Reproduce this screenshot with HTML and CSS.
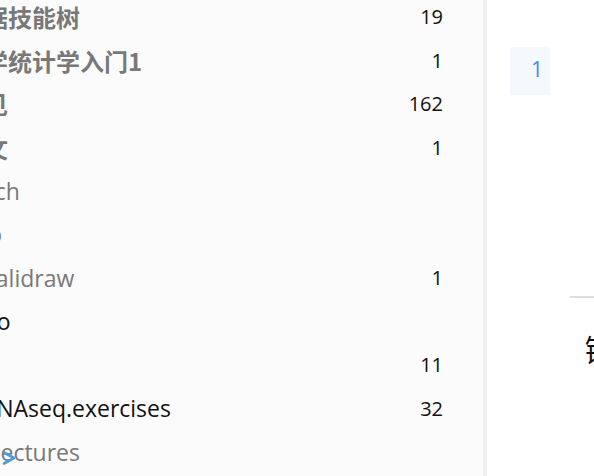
FILE: index.html
```html
<!DOCTYPE html>
<html lang="zh-CN">
<head>
<meta charset="utf-8">
<title>Notes</title>
<link rel="stylesheet" href="styles.css">
</head>
<body>
<div class="app">
  <aside class="sidebar">
    <ul class="list">
      <li class="row"><span class="name cjk">数据技能树</span><span class="count">19</span></li>
      <li class="row"><span class="name cjk">医学统计学入门1</span><span class="count">1</span></li>
      <li class="row"><span class="name cjk">意见</span><span class="count">162</span></li>
      <li class="row"><span class="name cjk">论文</span><span class="count">1</span></li>
      <li class="row"><span class="name muted">Patch</span><span class="count"></span></li>
      <li class="row"><span class="name muted">Info</span><span class="count"></span></li>
      <li class="row"><span class="name muted">Excalidraw</span><span class="count">1</span></li>
      <li class="row"><span class="name dark">Auto</span><span class="count"></span></li>
      <li class="row"><span class="name dark">R</span><span class="count">11</span></li>
      <li class="row"><span class="name dark">scRNAseq.exercises</span><span class="count">32</span></li>
      <li class="row"><span class="name muted">DL lectures</span><span class="count"></span></li>
    </ul>
    <svg class="chevron" width="18" height="14" viewBox="0 0 18 14"><polyline points="4,1.5 14,7 4,12.5" fill="none" stroke="#4a9be2" stroke-width="2.6" stroke-linecap="round" stroke-linejoin="round"/></svg>
  </aside>
  <main class="editor">
    <div class="gutter"><span class="lineno">1</span></div>
    <div class="rule"></div>
    <div class="heading">链</div>
  </main>
</div>
</body>
</html>
```
FILE: styles.css
```css
html, body {
  margin: 0;
  padding: 0;
  height: 100%;
  background: #ffffff;
  font-family: "Open Sans", "Noto Sans CJK SC", sans-serif;
}
.app {
  display: flex;
  height: 476px;
  overflow: hidden;
}
.sidebar {
  position: relative;
  width: 483px;
  flex: none;
  background: #fbfbfb;
  border-right: 4px solid #efefef;
  overflow: hidden;
}
.list {
  list-style: none;
  margin: -5px 0 0 -40px;
  padding: 0 40px 0 0;
}
.row {
  display: flex;
  align-items: center;
  justify-content: space-between;
  height: 43.5px;
  white-space: nowrap;
}
.name {
  font-size: 23px;
  color: #787878;
}
.name.cjk {
  font-size: 24px;
  font-weight: 700;
  font-family: "Noto Sans CJK SC", "Open Sans", sans-serif;
}
.name.muted {
  color: #787878;
}
.name.dark {
  color: #111111;
}
.count {
  font-size: 20px;
  color: #111111;
}
.chevron {
  position: absolute;
  left: 0;
  top: 451px;
}
.editor {
  flex: 1;
  display: flex;
  flex-direction: column;
  align-items: flex-start;
  background: #ffffff;
}
.gutter {
  margin: 47px 0 0 23px;
  width: 40px;
  height: 48px;
  box-sizing: border-box;
  padding: 7px 7px 0 0;
  text-align: right;
  line-height: 30px;
  background: #f5f9fd;
}
.lineno {
  font-size: 21px;
  color: #3f8ee8;
}
.rule {
  margin: 201px 0 0 83px;
  width: 40px;
  height: 2px;
  background: #dedede;
}
.heading {
  margin: 30px 0 0 98px;
  font-size: 30px;
  line-height: 40px;
  color: #111111;
  font-family: "Noto Sans CJK SC", sans-serif;
  white-space: nowrap;
}
```
